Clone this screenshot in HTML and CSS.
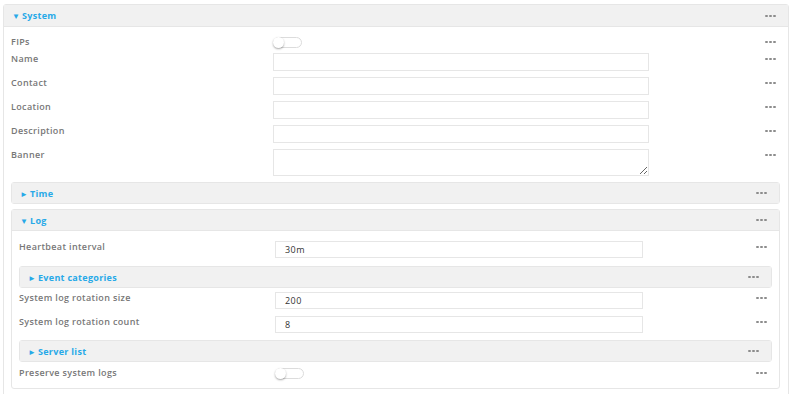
FILE: index.html
```html
<!DOCTYPE html>
<html>
<head>
    <title>Configuration - System</title>
    <link rel="stylesheet" href="styles.css">
</head>
<body>
    <div class="panel outer">
        <div class="panel-head">
            <span class="caret">&#9660;</span>
            <span class="title">System</span>
            <span class="dots"><i></i><i></i><i></i></span>
        </div>
        <div class="panel-body">
            <div class="row row-toggle">
                <div class="label">FIPs</div>
                <div class="control"><span class="toggle"></span></div>
                <span class="dots"><i></i><i></i><i></i></span>
            </div>
            <div class="row">
                <div class="label">Name</div>
                <div class="control"><input type="text"></div>
                <span class="dots"><i></i><i></i><i></i></span>
            </div>
            <div class="row">
                <div class="label">Contact</div>
                <div class="control"><input type="text"></div>
                <span class="dots"><i></i><i></i><i></i></span>
            </div>
            <div class="row">
                <div class="label">Location</div>
                <div class="control"><input type="text"></div>
                <span class="dots"><i></i><i></i><i></i></span>
            </div>
            <div class="row">
                <div class="label">Description</div>
                <div class="control"><input type="text"></div>
                <span class="dots"><i></i><i></i><i></i></span>
            </div>
            <div class="row">
                <div class="label">Banner</div>
                <div class="control"><textarea></textarea></div>
                <span class="dots"><i></i><i></i><i></i></span>
            </div>

            <!-- Time (collapsed) -->
            <div class="panel sub time">
                <div class="panel-head">
                    <span class="caret">&#9658;</span>
                    <span class="title">Time</span>
                    <span class="dots"><i></i><i></i><i></i></span>
                </div>
            </div>

            <!-- Log -->
            <div class="panel sub log">
                <div class="panel-head">
                    <span class="caret">&#9660;</span>
                    <span class="title">Log</span>
                    <span class="dots"><i></i><i></i><i></i></span>
                </div>
                <div class="panel-body">
                    <div class="row">
                        <div class="label">Heartbeat interval</div>
                        <div class="control"><input type="text" value="30m"></div>
                        <span class="dots"><i></i><i></i><i></i></span>
                    </div>
                    <div class="panel sub events">
                        <div class="panel-head">
                            <span class="caret">&#9658;</span>
                            <span class="title">Event categories</span>
                            <span class="dots"><i></i><i></i><i></i></span>
                        </div>
                    </div>
                    <div class="row">
                        <div class="label">System log rotation size</div>
                        <div class="control"><input type="text" value="200"></div>
                        <span class="dots"><i></i><i></i><i></i></span>
                    </div>
                    <div class="row">
                        <div class="label">System log rotation count</div>
                        <div class="control"><input type="text" value="8"></div>
                        <span class="dots"><i></i><i></i><i></i></span>
                    </div>
                    <div class="panel sub servers">
                        <div class="panel-head">
                            <span class="caret">&#9658;</span>
                            <span class="title">Server list</span>
                            <span class="dots"><i></i><i></i><i></i></span>
                        </div>
                    </div>
                    <div class="row row-toggle last">
                        <div class="label">Preserve system logs</div>
                        <div class="control"><span class="toggle"></span></div>
                        <span class="dots"><i></i><i></i><i></i></span>
                    </div>
                </div>
            </div>
        </div>
    </div>
</body>
</html>
```

FILE: styles.css
```css
body {
    font-family: "Open Sans", Arial, sans-serif;
    font-size: 9px;
    margin: 0;
    padding: 4px 5px 0 3px;
    background: #fff;
    color: #777;
    height: 394px;
    box-sizing: border-box;
    overflow: hidden;
}

/* Panels */
.panel {
    border: 1px solid #e6e6e6;
    border-radius: 3px;
    background: #fff;
}

.outer {
    height: 400px;
}

.panel-head {
    display: flex;
    align-items: center;
    height: 21px;
    padding-left: 8px;
    background: #f1f1f1;
    border-bottom: 1px solid #e6e6e6;
}

.panel-head .caret {
    color: #27a9e8;
    font-size: 8px;
    width: 10px;
}

.panel-head .title {
    color: #27a9e8;
    font-weight: 700;
    letter-spacing: 0.3px;
}

.panel-body {
    padding: 9px 0 0 0;
}

.sub {
    margin: 0 8px 0 7px;
}

.sub .panel-head {
    height: 20px;
}

.time {
    margin-top: 6px;
}

.time .panel-head {
    border-bottom: none;
}

.log {
    margin-top: 5px;
}

.log .panel-body {
    padding: 10px 0 9px;
}

.log .row {
    margin-bottom: 7px;
}

.events,
.servers {
    margin: 0 7px;
}

.events .panel-head,
.servers .panel-head {
    border-bottom: none;
}

.events {
    margin-top: 8px;
    margin-bottom: 4px;
}

.servers {
    margin-top: 7px;
    margin-bottom: 5px;
}

/* Rows */
.row {
    display: flex;
    align-items: flex-start;
    margin-bottom: 6px;
}

.row .label {
    flex: 0 0 34.3%;
    box-sizing: border-box;
    padding-left: 7px;
    font-weight: 600;
    line-height: 12px;
    letter-spacing: 0.35px;
}

.row .control {
    width: 48%;
}

.log .row.row-toggle,
.row-toggle {
    margin-bottom: 5px;
}

.log .row.last {
    margin-bottom: 0;
}

.row-toggle .label,
.row-toggle .control {
    display: flex;
    align-items: center;
    height: 12px;
}

input,
textarea {
    display: block;
    width: 100%;
    height: 18px;
    box-sizing: border-box;
    border: 1px solid #e6e6e6;
    border-radius: 0;
    padding: 0 9px;
    font-family: "Open Sans", Arial, sans-serif;
    font-size: 9px;
    letter-spacing: 0.4px;
    color: #333;
    outline: none;
}

textarea {
    height: 27px;
    resize: vertical;
    margin: 0;
}

.log input {
    height: 17px;
}

/* Toggle switch */
.toggle {
    display: block;
    width: 27px;
    height: 9px;
    border: 1px solid #dcdcdc;
    border-radius: 6px;
    position: relative;
    background: #fff;
}

.toggle::before {
    content: "";
    position: absolute;
    left: -1px;
    top: -1px;
    width: 11px;
    height: 11px;
    border-radius: 50%;
    background: #fff;
    box-shadow: 0 1px 2px rgba(0, 0, 0, 0.35);
}

/* Three-dot menu */
.dots {
    display: flex;
    gap: 1px;
    margin-left: auto;
    margin-right: 12px;
}

.row .dots {
    margin-top: 5px;
}

.dots i {
    display: block;
    width: 3px;
    height: 2px;
    border-radius: 1px;
    background: #8c8c8c;
}
```
